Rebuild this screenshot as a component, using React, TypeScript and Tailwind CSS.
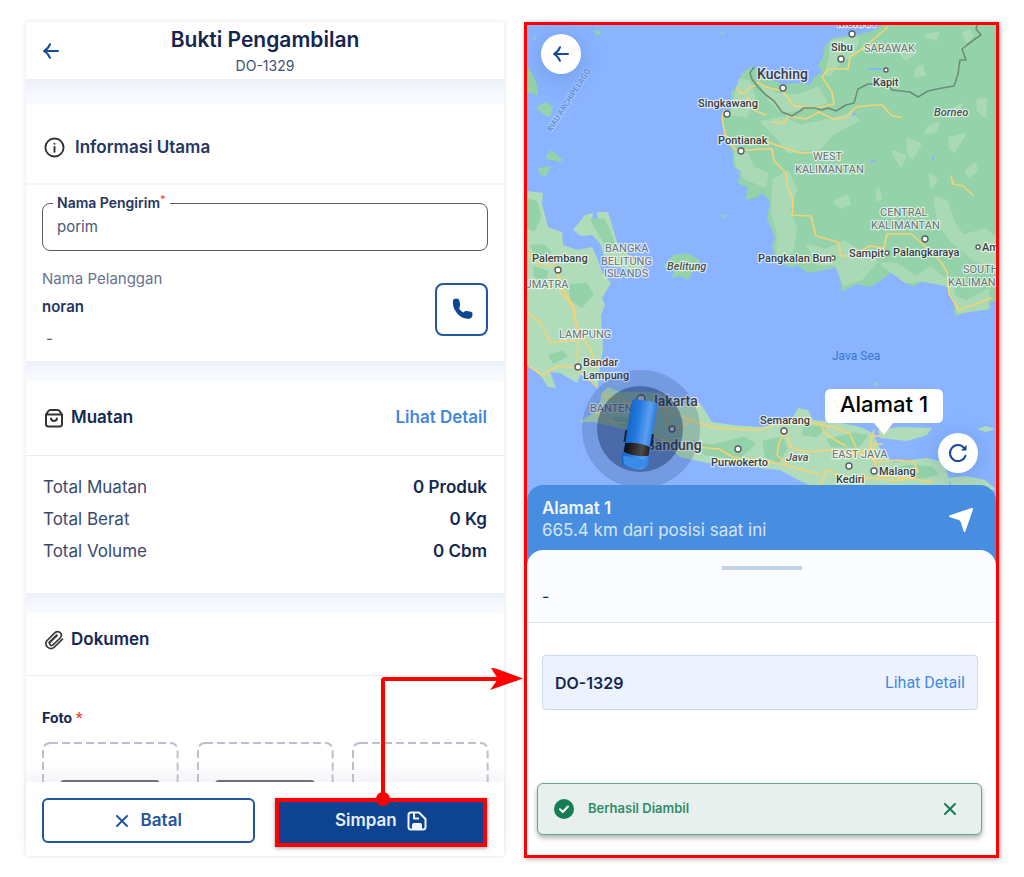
import type { ReactNode } from "react";

const land = "#94d3a9";
const landLight = "#b1dcb9";

const landShapes = [
  // Borneo
  "M890 20 L870 32 853 35 833 38 825 45 823 58 818 65 822 72 813 78 810 85 797 83 783 84 767 78 757 69 752 66 742 73 737 87 731 92 731 108 722 118 725 138 733 152 733 168 740 175 738 183 748 188 745 200 758 197 762 193 770 202 767 218 775 238 772 246 777 262 793 268 797 265 808 273 825 270 838 267 842 292 856 284 870 287 880 281 892 272 902 276 912 287 930 277 942 285 953 290 955 317 975 309 997 300 997 20Z",
  // Belitung and Riau islands
  "M663 267 L673 255 687 253 700 260 697 266 701 271 693 271 688 280 680 276 672 278 674 270Z",
  "M536 107 L546 102 553 107 550 117 543 114Z M545 158 L551 150 563 160 560 162 547 159Z M538 168 L551 166 546 176 540 175Z M594 30 L602 32 597 36Z M533 38 l3 -2 v5Z M720 33 l4 -2 v4Z M720 215 l7 0 -3 3Z M873 384 l5 -3 v5Z",
  "M526 64 C532 72 540 86 537 95 L526 92Z",
];

const lightShapes = [
  // Sumatra
  "M526 191 L543 193 542 204 548 227 562 232 563 245 577 250 592 247 598 260 602 272 611 283 602 298 605 305 601 315 603 350 600 367 598 387 590 378 583 370 577 383 560 373 550 372 556 388 548 387 540 375 526 365Z",
  // Bangka
  "M573 230 L585 215 593 213 592 222 598 222 597 212 608 212 614 232 617 242 632 258 645 267 640 271 610 266 604 256 600 243 592 235 581 236Z",
  // Java
  "M608 387 L620 392 640 392 660 393 680 404 700 403 712 422 733 425 760 427 780 424 793 417 798 408 808 410 813 420 837 422 860 427 873 433 882 453 893 462 927 458 943 462 948 475 950 490 820 490 798 480 780 470 760 468 740 464 707 463 680 457 660 440 640 433 593 422 580 422 598 410 602 393Z",
  // Madura and Bali
  "M878 430 L900 427 932 428 927 435 907 441 880 438Z",
  "M947 478 L965 476 985 480 997 490 955 490Z M977 429 l9 -3 9 3 -9 3Z",
];

const lightPatches = [
  "M740 80 l9 2 5 16 -8 18 -14 -2 4 -20Z",
  "M736 150 l11 4 6 14 14 6 -2 12 -20 -8 -8 -10Z",
  "M762 122 l22 -4 16 8 30 -6 22 -6 6 6 -26 14 -12 14 -32 4 -10 -14Z",
  "M774 180 l14 -8 8 18 -8 20 8 18 -4 24 -14 2 0 -22 -6 -20Z",
  "M808 246 l18 4 18 -8 18 12 8 -4 6 12 -14 16 -18 6 -8 -20 -18 0Z",
  "M882 264 l14 0 20 14 14 -10 18 14 4 14 14 6 22 -12 v18 l-30 4 -6 -26 -30 -6 -16 2Z",
  "M935 198 l12 4 6 20 10 14 22 -6 10 8 v26 l-20 -4 -22 -18 -14 -18Z",
  "M832 42 l14 -3 12 -1 -4 14 -14 10 -10 12 -4 0 4 -14Z",
  "M762 86 l14 8 22 2 20 -8 8 14 -22 6 -22 4 -12 -12Z",
  "M900 52 l10 -4 4 6 -8 5Z M916 70 l6 -4 2 8 -8 2Z M926 36 l12 -3 -2 6Z M963 34 l6 -3 3 5 -5 5Z M908 140 l12 4 -8 14 -4 -6Z M928 128 l10 -5 -3 8 -9 2Z M950 138 l14 -3 -10 16 -4 -4Z M978 100 l8 0 -1 16 -7 -6Z M930 175 l6 4 -4 8Z M893 152 l12 4 -4 10Z M966 171 l9 -7 1 6 -7 6Z M835 202 l12 -6 2 8 -8 3Z M878 190 l3 8 -4 2Z M955 108 l6 -3 -2 6Z",
];

const darkPatches = [
  "M528 200 l8 2 4 14 -6 14 -6 -2Z",
  "M570 286 l16 -2 6 10 -10 12 -10 -6Z",
  "M535 268 l12 4 -2 6 -10 -2Z",
  "M550 356 l12 -4 4 4 -12 6Z",
  "M592 220 l12 0 8 18 2 10 -8 -4 -6 -10Z",
  "M532 246 l12 0 6 6 -14 4Z",
  "M614 418 l22 2 16 8 -2 4 -32 -8Z",
  "M692 442 l20 4 32 -8 10 6 -16 14 -32 -4Z",
  "M764 442 l18 -4 4 10 -8 14 -12 -6Z",
  "M828 440 l26 -6 12 2 -8 10 -26 0Z",
  "M897 468 l18 -2 16 2 6 6 -18 4Z",
  "M804 426 l20 2 -8 8 -12 -2Z",
];

const roads = [
  "M737 87 q2 8 8 6 l5 -6 6 -2 M748 97 q-1 9 8 14 l10 4",
  "M724 110 l-2 8 3 17 6 4 h30 l15 6 24 8 26 -1",
  "M726 139 l10 11 16 0 8 -1 h12 l2 12 12 12 2 15 5 12 -1 15 19 1 5 20 22 6 3 14 10 0 16 -5 10 5",
  "M757 82 q12 8 25 8 l12 16 22 2 18 -4 -2 -12 -10 -15 6 -8 h20 l2 -12 12 -8 26 -22",
  "M772 122 l12 1 4 -7 18 3 13 -7 14 7 12 -1 11 -11 18 -2 8 0 10 11 9 1",
  "M862 250 l8 -4 14 2 3 -14 h24 l10 8 8 8 12 12 6 10 2 22 10 16 20 -7 12 -5",
  "M951 176 l2 8 10 2 10 9",
  "M526 251 l10 12 22 4 2 24 14 18 4 26 -1 35 14 11 6 6",
  "M526 312 l14 10 10 20 q12 -1 26 -1 M578 368 l-20 -2 -16 9 -12 -8 M558 270 l4 18 10 16 5 26 14 20 4 16",
  "M602 395 l10 3 26 6 24 3 16 8 14 5 18 7 24 2 26 1 22 -9 18 0 22 4 14 3 14 6 8 18 20 10 20 -2 16 2 4 10",
  "M597 414 l14 8 20 2 28 14 14 5 24 4 22 2 14 8 24 3 24 4 22 6 18 4 M665 408 l2 16 10 5 14 -8",
  "M785 431 l6 16 14 5 26 -2 24 4 18 -6 M785 431 l-6 12 -2 12 10 8 M820 422 l4 10 8 6 14 8 M826 470 l-4 12 -10 8 M826 470 l20 8 28 0 20 3 20 -4",
  "M874 430 l-4 14 6 20 2 12 M870 436 h10 M872 444 l10 0 M878 476 l30 2 24 4",
];

type MapLabel = {
  x: number;
  y: number;
  text: string;
  kind?: "city" | "region" | "big" | "island" | "sea";
};

const labels: MapLabel[] = [
  { x: 757, y: 79, text: "Kuching", kind: "big" },
  { x: 831, y: 51, text: "Sibu" },
  { x: 864, y: 52, text: "SARAWAK", kind: "region" },
  { x: 837, y: 27, text: "MUKAH", kind: "region" },
  { x: 873, y: 86, text: "Kapit" },
  { x: 934, y: 116, text: "Borneo", kind: "island" },
  { x: 698, y: 107, text: "Singkawang" },
  { x: 718, y: 144, text: "Pontianak" },
  { x: 813, y: 160, text: "WEST", kind: "region" },
  { x: 795, y: 173, text: "KALIMANTAN", kind: "region" },
  { x: 880, y: 216, text: "CENTRAL", kind: "region" },
  { x: 871, y: 229, text: "KALIMANTAN", kind: "region" },
  { x: 758, y: 262, text: "Pangkalan Bun" },
  { x: 849, y: 257, text: "Sampit" },
  { x: 893, y: 256, text: "Palangkaraya" },
  { x: 982, y: 251, text: "Am" },
  { x: 963, y: 273, text: "SOUTH", kind: "region" },
  { x: 948, y: 286, text: "KALIMANT", kind: "region" },
  { x: 605, y: 252, text: "BANGKA", kind: "region" },
  { x: 601, y: 265, text: "BELITUNG", kind: "region" },
  { x: 604, y: 277, text: "ISLANDS", kind: "region" },
  { x: 667, y: 270, text: "Belitung", kind: "island" },
  { x: 532, y: 262, text: "Palembang" },
  { x: 518, y: 288, text: "SUMATRA", kind: "region" },
  { x: 559, y: 338, text: "LAMPUNG", kind: "region" },
  { x: 583, y: 366, text: "Bandar" },
  { x: 583, y: 379, text: "Lampung" },
  { x: 832, y: 360, text: "Java Sea", kind: "sea" },
  { x: 590, y: 412, text: "BANTEN", kind: "region" },
  { x: 650, y: 406, text: "Jakarta", kind: "big" },
  { x: 646, y: 450, text: "Bandung", kind: "big" },
  { x: 711, y: 466, text: "Purwokerto" },
  { x: 760, y: 424, text: "Semarang" },
  { x: 786, y: 461, text: "Java", kind: "island" },
  { x: 832, y: 458, text: "EAST JAVA", kind: "region" },
  { x: 879, y: 475, text: "Malang" },
  { x: 836, y: 483, text: "Kediri" },
];

const dots = [
  [852, 34, 3], [841, 59, 3], [886, 70, 2], [783, 88, 3], [727, 114, 3], [741, 151, 3],
  [833, 258, 2], [887, 253, 2], [925, 239, 3], [978, 247, 2], [558, 270, 3], [578, 367, 3],
  [641, 399, 4], [672, 429, 3], [738, 449, 3], [784, 431, 3], [849, 466, 3], [874, 471, 3],
];

const labelStyles = {
  city: "fill-[#3c4043] text-[11px] font-medium",
  region: "fill-[#6b7478] text-[11px]",
  big: "fill-[#3c4043] text-[14px] font-medium",
  island: "fill-[#4b5459] text-[11px] font-medium italic",
  sea: "fill-[#3b76cf] text-[12px] stroke-none",
};

function RegionMap() {
  return (
    <svg
      viewBox="527 25 469 477"
      preserveAspectRatio="xMidYMin slice"
      className="block h-[477px] w-full bg-[#8ab4ff]"
      role="img"
      aria-label="Peta rute pengiriman"
    >
      <defs>
        <linearGradient id="van-body" x1="0" x2="1">
          <stop offset="0" stopColor="#1565c8" />
          <stop offset="0.35" stopColor="#2478e0" />
          <stop offset="0.75" stopColor="#5a9ff0" />
          <stop offset="1" stopColor="#2c79d8" />
        </linearGradient>
        <linearGradient id="van-glass" x1="0" x2="1">
          <stop offset="0" stopColor="#0a0a0a" />
          <stop offset="0.7" stopColor="#4a4a4a" />
          <stop offset="1" stopColor="#222" />
        </linearGradient>
      </defs>
      {landShapes.map((d) => (
        <path key={d} d={d} fill={land} />
      ))}
      {lightShapes.map((d) => (
        <path key={d} d={d} fill={landLight} />
      ))}
      {lightPatches.map((d) => (
        <path key={d} d={d} fill="#a9dab5" stroke="#a9dab5" strokeWidth="3" strokeLinejoin="round" />
      ))}
      {darkPatches.map((d) => (
        <path key={d} d={d} fill={land} stroke={land} strokeWidth="3" strokeLinejoin="round" />
      ))}
      <path
        d="M818 42 q3 -6 4 0 l-1 10 M566 246 l6 -16 M733 167 l8 6 M868 69 h14 M870 162 l6 -2 M852 115 l4 -1 M933 156 v4"
        fill="none"
        stroke="#8ab4ff"
        strokeWidth="2"
      />
      <g fill="none" stroke="#f6d274" strokeWidth="1.6" strokeLinejoin="round" strokeLinecap="round">
        {roads.map((d) => (
          <path key={d} d={d} />
        ))}
      </g>
      <path
        d="M754 67 l-4 6 2 6 6 8 8 8 8 6 8 11 10 4 8 -5 4 -3 h10 l8 2 6 -2 8 3 10 -6 8 -2 4 -14 10 -5 h20 l4 6 18 2 8 5 10 -6 14 -3 12 -2 4 -12 2 -14 6 0 -4 -11 5 -4 8 -6 6 -4 -5 -6 2 -8 8 -6 6 -4"
        fill="none"
        stroke="#6f8d7b"
        strokeWidth="1.6"
        strokeLinejoin="round"
      />
      {dots.map(([cx, cy, r]) => (
        <circle key={`${cx}-${cy}`} cx={cx} cy={cy} r={r} fill="#fff" stroke="#5b5f63" strokeWidth="1.4" />
      ))}
      <g className="font-[Roboto,sans-serif]" stroke="#ffffff" strokeOpacity="0.65" strokeWidth="2.5" strokeLinejoin="round" paintOrder="stroke">
        {labels.map(({ x, y, text, kind = "city" }) => (
          <text key={`${x}-${y}`} x={x} y={y} className={labelStyles[kind]}>
            {text}
          </text>
        ))}
        <text transform="translate(551 132) rotate(-57)" strokeOpacity="0.2" className="fill-[#4f83cf] text-[8px]">
          RIAU ARCHIPELAGO
        </text>
      </g>

      {/* vehicle position */}
      <circle cx="641" cy="429" r="59" fill="#1d3567" opacity="0.2" />
      <circle cx="640" cy="429" r="43" fill="#0f2a5c" opacity="0.42" />
      <g transform="rotate(9 639 433)">
        <path d="M631 400 h18 q4 0 4 5 v50 q1 8 -2 12 q-12 5 -23 0 q-3 -4 -2 -12 l1 -50 q0 -5 4 -5Z" fill="url(#van-body)" />
        <path d="M627 458 h25 l-2 8 q-11 5 -21 0Z" fill="#3b8ce8" />
        <path d="M627 445 q13 -3 25 0 l0 9 q-13 4 -25 0Z" fill="url(#van-glass)" />
        <path d="M626 432 v12 M653 432 v12" stroke="#15233d" strokeWidth="2" />
      </g>

      {/* destination callout */}
      <path
        d="M831 389 h106 q6 0 6 6 v22 q0 6 -6 6 h-44 l-9 12 -10 -12 h-43 q-6 0 -6 -6 v-22 q0 -6 6 -6Z"
        fill="#fff"
      />
      <text x="884" y="412" textAnchor="middle" className="fill-black font-[Inter,sans-serif] text-[22px] font-medium">
        Alamat 1
      </text>
    </svg>
  );
}

function BackArrow() {
  return (
    <svg viewBox="0 0 18 18" className="size-[18px]" fill="none" stroke="#164b96" strokeWidth="2" strokeLinecap="round" strokeLinejoin="round" aria-hidden>
      <path d="M16 9H2M8 2.2Q6.500 6.500 2 9Q6.500 11.500 8 15.800" />
    </svg>
  );
}

function CrossIcon() {
  return (
    <svg viewBox="0 0 14 14" className="size-[14px]" fill="none" stroke="currentColor" strokeWidth="2" strokeLinecap="round" aria-hidden>
      <path d="M2 2l10 10M12 2L2 12" />
    </svg>
  );
}

function SectionGap() {
  return <div className="h-5 bg-linear-to-b from-[#ebf0f7] to-[#f6f9fe] to-60%" />;
}

function SectionTitle({ icon, children }: { icon: ReactNode; children: ReactNode }) {
  return (
    <h2 className="flex items-center gap-[7px] text-[17px] font-semibold text-[#152850]">
      {icon}
      {children}
    </h2>
  );
}

function TotalRow({ label, value }: { label: string; value: string }) {
  return (
    <div className="flex h-8 items-center justify-between text-[17px]">
      <dt className="text-[#3a4a6d]">{label}</dt>
      <dd className="font-semibold text-[#152850]">{value}</dd>
    </div>
  );
}

function PhotoSlot({ filled }: { filled?: boolean }) {
  return (
    <button type="button" aria-label="Tambah foto" className="relative h-[135px]">
      <svg className="absolute inset-0 size-full overflow-visible" aria-hidden>
        <rect x="1" y="1" width="99%" height="133" rx="7" fill="none" stroke="#bcc0ca" strokeWidth="2" strokeDasharray="8 4" />
      </svg>
      {filled && <span className="absolute inset-x-[18px] top-[38px] h-[60px] rounded-sm bg-[#6f7073]" />}
    </button>
  );
}

function PickupForm() {
  return (
    <section className="flex flex-col bg-white shadow-[0_0_4px_rgba(0,0,0,0.12)]">
      <header className="relative flex h-[57px] flex-col items-center pt-1">
        <button type="button" aria-label="Kembali" className="absolute top-5 left-4">
          <BackArrow />
        </button>
        <h1 className="text-[21px] leading-7 font-semibold text-[#14264f]">Bukti Pengambilan</h1>
        <p className="text-[14px] leading-6 text-[#42517a]">DO-1329</p>
      </header>
      <div className="h-[25px] bg-linear-to-b from-[#ebf0f7] to-[#f6f9fe] to-60%" />

      <div className="flex h-[81px] items-center border-b-2 border-[#f4f4f6] px-[18px] pt-2">
        <h2 className="flex items-center gap-2.5 text-[17px] font-semibold text-[#253660]">
          <svg viewBox="0 0 22 22" className="size-[21px]" fill="none" stroke="#333" strokeWidth="2" strokeLinecap="round" aria-hidden>
            <circle cx="11" cy="11" r="9.500" />
            <path d="M11 10.500v5M11 7v.2" />
          </svg>
          Informasi Utama
        </h2>
      </div>
      <div className="h-[176px] px-4 pt-2">
        <fieldset className="h-[58px] rounded-lg border border-[#5c5c5c] pl-2.5">
          <legend className="px-1 text-[14px] leading-5 font-semibold text-[#253660]">
            <label htmlFor="sender">
              Nama Pengirim<sup className="text-[#f4574a]">*</sup>
            </label>
          </legend>
          <input
            id="sender"
            defaultValue="porim"
            className="mt-0.5 block w-full px-1 text-[15px] leading-6 text-[#4a5878] outline-none"
          />
        </fieldset>
        <div className="flex items-center justify-between pt-4">
          <div>
            <p className="text-[15px] leading-6 text-[#68738e]">Nama Pelanggan</p>
            <p className="py-1 text-[15px] leading-6 font-semibold text-[#253660]">noran</p>
            <p className="pt-1 pl-1 text-[15px] leading-6 text-[#4a5878]">-</p>
          </div>
          <button
            type="button"
            aria-label="Telepon pelanggan"
            className="flex size-[53px] items-center justify-center rounded-lg border-2 border-[#23569f]"
          >
            <svg viewBox="0 0 22 22" className="size-[22px]" aria-hidden>
              <path
                d="M2 2.700Q2 .9 4 .8L6.500 .7Q8 .6 8.300 2.200L9.200 6.500Q9.400 7.800 8.400 8.600L8.800 10.300L7.600 9.900Q9.400 12.900 12.700 14.500L13.600 13.500Q14.500 12.600 15.700 12.900L20 13.800Q21.600 14.200 21.500 15.800L21.300 18Q21 20.400 18.600 20.700Q11 21 6 15.200Q1.200 9.500 2 2.700Z"
                fill="#0f4694"
              />
            </svg>
          </button>
        </div>
      </div>
      <SectionGap />

      <div className="flex h-[75px] items-center justify-between border-b border-[#ececf0] px-[17px] pl-[18px]">
        <SectionTitle
          icon={
            <svg viewBox="0 0 20 20" className="size-5" fill="none" stroke="#333" strokeWidth="2" strokeLinejoin="round" strokeLinecap="round" aria-hidden>
              <path d="M2 6.500L4.200 3.200Q5 2 6.500 2H13.500Q15 2 15.800 3.200L18 6.500V16Q18 18.500 15.500 18.500H4.500Q2 18.500 2 16ZM2 6.500H18M7 10.500Q7.500 13 10 13Q12.500 13 13 10.500" />
            </svg>
          }
        >
          Muatan
        </SectionTitle>
        <a href="#muatan" className="text-[17px] font-semibold text-[#4289dc]">
          Lihat Detail
        </a>
      </div>
      <dl className="h-[137px] px-[17px] pt-4">
        <TotalRow label="Total Muatan" value="0 Produk" />
        <TotalRow label="Total Berat" value="0 Kg" />
        <TotalRow label="Total Volume" value="0 Cbm" />
      </dl>
      <SectionGap />

      <div className="flex h-[63px] items-center border-b border-[#ececf0] px-[18px] pb-2">
        <SectionTitle
          icon={
            <svg viewBox="0 0 20 20" className="size-5" fill="none" stroke="#3d3d3d" strokeWidth="1.700" strokeLinecap="round" strokeLinejoin="round" aria-hidden>
              <path d="M18.500 9.200L10.300 17.200Q7 20 3.600 17.200Q.2 13.500 3.200 10.300L11 2.600Q13.500 .4 16.200 2.700Q18.600 5.200 16.300 7.800L8.900 15Q7.500 16 6.200 15Q4.900 13.500 6.200 12.200L13 5.600" />
              <path d="M5 12.500L12.600 5" />
            </svg>
          }
        >
          Dokumen
        </SectionTitle>
      </div>
      <div className="h-[106px] overflow-hidden px-4 pt-[30px]">
        <h3 className="font-[Roboto,sans-serif] text-[15px] leading-6 font-bold text-[#152850]">
          Foto <span className="text-[#f4473a]">*</span>
        </h3>
        <div className="grid grid-cols-3 gap-[19px] pt-3">
          <PhotoSlot filled />
          <PhotoSlot filled />
          <PhotoSlot />
        </div>
      </div>

      <footer className="grid h-[74px] grid-cols-2 gap-5 bg-white pt-4 pr-[17px] pl-4 shadow-[0_-8px_12px_rgba(40,70,120,0.06)]">
        <button
          type="button"
          className="flex h-[45px] items-center justify-center gap-3 rounded-md border-2 border-[#23569f] text-[17px] font-semibold text-[#23569f]"
        >
          <CrossIcon />
          Batal
        </button>
        <div className="relative h-[49px] border-4 border-[#fe0000] shadow-[0_1px_4px_rgba(0,0,0,0.4)]">
          <button
            type="button"
            className="flex size-full items-center justify-center gap-2.5 bg-[#0e4391] pb-1 text-[17px] font-semibold text-[#e6edf8]"
          >
            Simpan
            <svg viewBox="0 0 20 20" className="size-5" fill="none" stroke="#f2f6fc" strokeWidth="2" strokeLinejoin="round" aria-hidden>
              <path d="M4 1.500H12L18.500 8V16Q18.500 18.500 16 18.500H4Q1.500 18.500 1.500 16V4Q1.500 1.500 4 1.500ZM7 2V7.500H12" />
              <path d="M6 18V14Q6 13 7 13H13Q14 13 14 14V18Z" fill="#f2f6fc" />
            </svg>
          </button>
          {/* connector to the next screen */}
          <div className="pointer-events-none absolute -right-[34px] bottom-full left-1/2 z-10 h-[125px] rounded-tl-sm border-t-4 border-l-4 border-[#fe0000]">
            <span className="absolute -bottom-1 -left-[9px] size-[14px] rounded-full bg-[#fe0000]" />
            <svg viewBox="0 0 34 22" className="absolute -top-[13px] -right-[6px] h-[22px] w-[34px]" aria-hidden>
              <path d="M2 0Q6 0 8 1L34 10.500L1 22L9 11Z" fill="#fe0000" />
            </svg>
          </div>
        </div>
      </footer>
    </section>
  );
}

function TrackingScreen() {
  return (
    <section className="flex flex-col border-3 border-[#fe0000] bg-white shadow-[1px_1px_5px_rgba(0,0,0,0.35)]">
      <div className="relative">
        <RegionMap />
        <button
          type="button"
          aria-label="Kembali"
          className="absolute top-[9px] left-[14px] flex size-10 items-center justify-center rounded-full bg-white shadow-[0_4px_24px_rgba(30,70,150,0.25)]"
        >
          <BackArrow />
        </button>
        <button
          type="button"
          aria-label="Muat ulang"
          className="absolute top-[408px] right-[18px] flex size-10 items-center justify-center rounded-full bg-white shadow-[0_4px_24px_rgba(30,70,150,0.25)]"
        >
          <svg viewBox="0 0 20 20" className="size-5" fill="none" stroke="#164b96" strokeWidth="2" strokeLinecap="round" aria-hidden>
            <path d="M17.500 12.800A8 8 0 1 1 16 4.800" />
            <path d="M18.500 1.800V7.500H12.800L15 5.500Z" fill="#164b96" stroke="none" />
          </svg>
        </button>
      </div>

      <div className="relative -mt-[17px] rounded-t-2xl bg-[#488ee0]">
        <div className="flex h-[65px] items-center justify-between pr-[22px] pl-[15px]">
          <div className="pt-0.5">
            <h2 className="text-[17px] leading-[22px] font-semibold text-[#f2f7fd]">Alamat 1</h2>
            <p className="text-[17px] leading-[22px] text-[#d5e5f8]">665.4 km dari posisi saat ini</p>
          </div>
          <svg viewBox="0 0 26 26" className="mt-1 size-[26px]" aria-label="Navigasi" role="img">
            <path d="M23.500 1Q25.500 .5 25 2.500L17.500 24Q16.500 25.800 15.500 24L12.800 15.200Q12.300 13.500 10.800 13L2 10.300Q-.2 9.300 2 8.200Z" fill="#fff" />
          </svg>
        </div>
        <div className="h-[73px] rounded-t-2xl border-b border-[#e1e5ee] bg-[#fbfcff] px-[15px] pt-4">
          <div className="mx-auto h-1 w-20 bg-[#c5d3e8]" />
          <p className="pt-3.5 text-[16px] leading-6 text-[#152850]">-</p>
        </div>
      </div>

      <div className="pt-8 pr-[18px] pl-[15px]">
        <div className="flex h-[55px] items-center justify-between rounded-sm border border-[#ccd9ee] bg-[#ecf3fe] px-3">
          <p className="text-[16px] font-semibold text-[#152850]">DO-1329</p>
          <a href="#do-1329" className="font-[Roboto,sans-serif] text-[16px] text-[#4289dc]">
            Lihat Detail
          </a>
        </div>
      </div>

      <div
        role="status"
        className="mr-3.5 ml-2.5 mt-[73px] flex h-[52px] items-center rounded-md border border-[#5fa98b] bg-[#e7f0ec] pr-6 pl-4 text-[#177d55] shadow-[0_3px_5px_rgba(0,0,0,0.3)]"
      >
        <svg viewBox="0 0 20 20" className="size-5" aria-hidden>
          <circle cx="10" cy="10" r="10" fill="#177d55" />
          <path d="M6 10.300L8.800 13L14 7.500" fill="none" stroke="#fff" strokeWidth="2" strokeLinecap="round" strokeLinejoin="round" />
        </svg>
        <p className="flex-1 pl-3.5 text-[13px] font-semibold text-[#358c69]">Berhasil Diambil</p>
        <button type="button" aria-label="Tutup">
          <CrossIcon />
        </button>
      </div>
      <div className="h-5" />
    </section>
  );
}

export default function App() {
  return (
    <main className="grid min-h-screen grid-cols-[478fr_475fr] items-start gap-5 bg-white pt-[22px] pr-[25px] pb-4 pl-[26px] font-[Inter,sans-serif]">
      <PickupForm />
      <TrackingScreen />
    </main>
  );
}
